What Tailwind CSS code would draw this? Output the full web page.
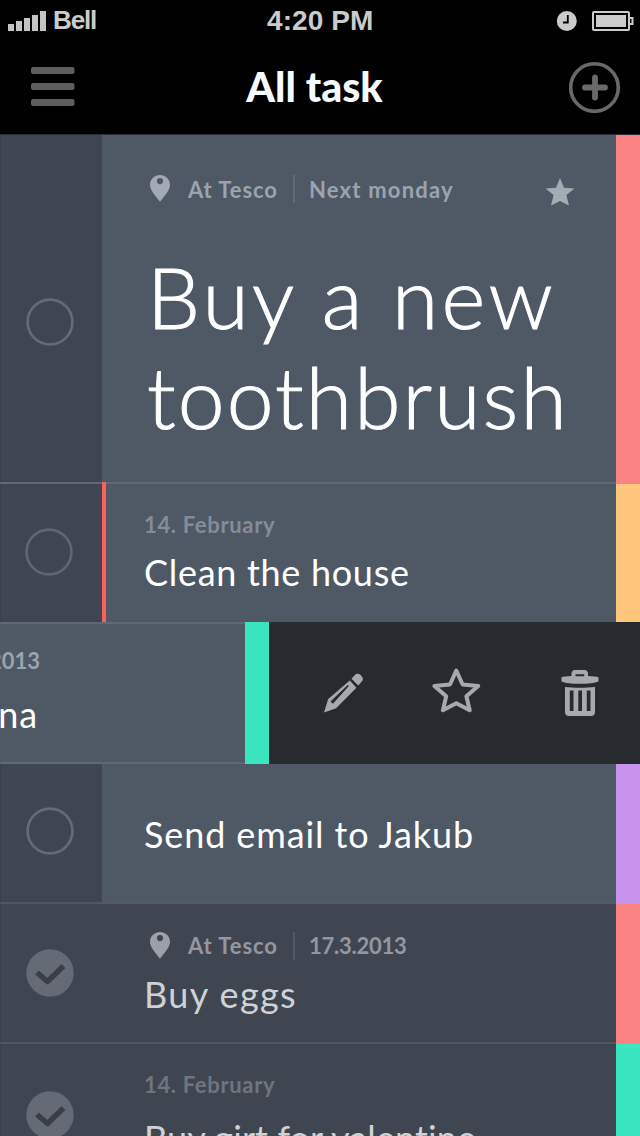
<!DOCTYPE html>
<html lang="en">
<head>
<meta charset="utf-8">
<title>All task</title>
<script src="https://cdn.jsdelivr.net/npm/@tailwindcss/browser@4"></script>
</head>
<body class="bg-black">
<main class="w-[640px] h-[1136px] overflow-hidden flex flex-col bg-black font-['Lato',sans-serif] whitespace-nowrap">

  <!-- Status bar -->
  <div class="h-10 shrink-0 grid grid-cols-[267px_1fr_84px] items-center text-[#cbcbcb] font-['Liberation_Sans',sans-serif] font-bold">
    <div class="flex items-center pl-2 gap-[6px]">
      <svg width="39" height="20" viewBox="0 0 39 20" fill="#c4c4c4"><path d="M0 13h6v7H0zM8 10h6v10H8zM16 7h6v13h-6zM24 4h6v16h-6zM32 0h6v20h-6z"/></svg>
      <span class="text-[26px] leading-10 tracking-[-1.15px] pb-[2px]">Bell</span>
    </div>
    <span class="text-[28px] leading-10 tracking-[0.1px]">4:20 PM</span>
    <div class="flex items-center gap-[15px]">
      <svg width="21" height="20" viewBox="0 0 21 20"><circle cx="10.8" cy="10" r="10" fill="#cbcbcb"/><path d="M11.800 4v7.500H7" fill="none" stroke="#000" stroke-width="1.800"/></svg>
      <svg width="42" height="20" viewBox="0 0 42 20" fill="none" stroke="#cbcbcb" stroke-width="2"><rect x="1" y="1" width="36" height="18" rx="1"/><rect x="4" y="4" width="30" height="12" fill="#cbcbcb" stroke="none"/><path d="M38 7h2.500v6H38"/></svg>
    </div>
  </div>

  <!-- Navigation bar -->
  <header class="h-[95px] shrink-0 flex items-start justify-between pl-[31px] pr-[19px] border-b border-[#27303a]">
    <svg class="mt-[27px]" width="44" height="40" viewBox="0 0 44 40" fill="#5d5d5d"><rect width="43.500" height="7" rx="2"/><rect y="16" width="43.500" height="7" rx="2"/><rect y="32" width="43.500" height="7" rx="2"/></svg>
    <h1 class="mt-[22px] mr-[15px] text-[41px] leading-[50px] font-black text-[#f5faff]">All task</h1>
    <svg class="mt-[21px]" width="52" height="52" viewBox="0 0 52 52" fill="none" stroke="#696969"><circle cx="25.500" cy="26.500" r="23.800" stroke-width="3.600"/><path d="M26 16.500v20M16 26.500h20" stroke-width="5.800" stroke-linecap="round"/></svg>
  </header>

  <!-- Featured task -->
  <section class="h-[349px] shrink-0 flex">
    <div class="w-[616px] flex border-b-2 border-[#5f6a76]">
      <div class="w-[102px] flex justify-center pr-[4px] pt-[163px] bg-[#404651] border-l border-[#3a404a]">
        <svg width="48" height="48" viewBox="0 0 48 48" fill="none" stroke="#646a76" stroke-width="2.700"><circle cx="24" cy="24" r="22.400"/></svg>
      </div>
      <div class="flex-1 pl-[43px] pt-10 bg-[#4e5965]">
        <div class="h-7 flex items-center text-[22px] leading-7 font-bold text-[#9ba3ae]">
          <svg class="ml-[5px] mb-[2px]" width="20" height="27" viewBox="0 0 20 27" fill="#a3a9b3"><path fill-rule="evenodd" d="M10 0C4.500 0 0 4.300 0 9.700c0 5.600 5.500 11 10 17 4.500-6 10-11.400 10-17C20 4.300 15.500 0 10 0zm0 3a3.100 3.100 0 1 1 0 6.200A3.100 3.100 0 0 1 10 3z"/></svg>
          <span class="ml-[18px] pt-[2px] w-[105px] tracking-[0.93px]">At Tesco</span>
          <i class="w-[2px] h-7 bg-[#616b76]"></i>
          <span class="ml-[14px] pt-[2px] tracking-[1.2px]">Next monday</span>
          <svg class="ml-[91px] mt-[6px]" width="30" height="28" viewBox="0 0 30 28" fill="#a5abb3"><path d="M15 0l4 9.800 10.500.6-8.100 6.700L24 27.500l-9-4.600-9 4.600 2.600-10.400L.5 10.400 11 9.800z"/></svg>
        </div>
        <h2 class="mt-[44px] pl-[2px] text-[84px] leading-[100px] font-light text-white [-webkit-text-stroke:1px_#fff]"><span class="block tracking-[3.4px]">Buy a new</span><span class="block tracking-[2.1px]">toothbrush</span></h2>
      </div>
    </div>
    <div class="w-6 bg-[#fa8282]"></div>
  </section>

  <!-- Overdue task -->
  <section class="h-[138px] shrink-0 flex">
    <div class="w-[102px] flex justify-center pr-[6px] pt-11 bg-[#404651] border-l border-[#3a404a]">
      <svg width="48" height="48" viewBox="0 0 48 48" fill="none" stroke="#5f6571" stroke-width="2.700"><circle cx="24" cy="24" r="22.400"/></svg>
    </div>
    <div class="relative w-1 bg-[#fd5f5f]"><i class="absolute -top-[2px] left-0 w-1 h-[2px] bg-[#fd5f5f]"></i></div>
    <div class="flex-1 pl-[38px] pt-[27px] bg-[#4e5965]">
      <p class="text-[22px] leading-7 font-bold tracking-[0.660px] text-[#848c97]">14. February</p>
      <p class="mt-[11px] text-[36px] leading-11 tracking-[0.7px] text-white">Clean the house</p>
    </div>
    <div class="w-6 bg-[#ffc67d]"></div>
  </section>

  <!-- Swiped task with its actions -->
  <section class="h-[142px] shrink-0 flex bg-[#272a2f]">
    <div class="w-[245px] shrink-0 overflow-hidden bg-[#4e5965] border-y-2 border-[#5f6a76]">
      <div class="w-10 flex flex-col items-end pt-[23px]">
        <p class="text-[22px] leading-7 font-bold text-[#9ba3ae]">17.3.2013</p>
        <p class="mt-[17px] pr-[2px] text-[36px] leading-11 tracking-[0.9px] text-white">Call Anna</p>
      </div>
    </div>
    <div class="w-6 shrink-0 bg-[#3be5bf]"></div>
    <div class="flex-1 grid grid-cols-[110px_127px_1fr] pl-[54px] pt-[46px]">
      <svg width="42" height="46" viewBox="323 668 42 46" fill="#a7a9ac"><path fill-rule="evenodd" d="M324 712.500l4.200-13.500 21.600-18.500 6.600 7.300-20.300 20.400zM330.500 701.500l2.400 2.200 16-17.600-1.200-1.200zM351.500 678.800l3.500-4c1.500-1.500 4-1.300 5.600.2l1.200 1.400c1.500 1.700 1.500 3.500.2 4.900l-3.700 4.100z"/></svg>
      <svg class="-ml-[2px]" width="50" height="46" viewBox="0 0 50 46" fill="none" stroke="#a7a9ac" stroke-width="4" stroke-linejoin="round"><path d="M25.300 2.500l6.300 14 15.600 1.500-11.800 10.200 3.300 14-13.400-7-13.400 7 3.300-14L3.400 18 19 16.500z"/></svg>
      <svg width="40" height="48" viewBox="0 0 40 48" fill="#a7a9ac"><path fill-rule="evenodd" d="M11.500 8V5.500c0-2 1.500-3.500 3.500-3.500h9.500c2 0 3.500 1.500 3.500 3.500V8c5 .2 8.500.7 10.500 1.300v4.200c-4 1.500-10 2.300-18.500 2.300S5 15 1.500 13.500V9.300C3.500 8.700 7 8.200 11.500 8zM15.500 6.300v2h8.700v-2zM5 19c9 .9 21 .9 30 0v25c0 2.500-1.500 4-4 4H9c-2.500 0-4-1.500-4-4zM9.800 22.500V43h3.700V22.500zM18.300 22.500V43h3.700V22.500zM26.800 22.500V43h3.700V22.500z"/></svg>
    </div>
  </section>

  <!-- Single-line task -->
  <section class="h-[140px] shrink-0 flex">
    <div class="w-[102px] flex justify-center pr-[4px] pt-[43px] bg-[#404651] border-l border-l-[#3a404a] border-b-2 border-b-[#505864]">
      <svg width="48" height="48" viewBox="0 0 48 48" fill="none" stroke="#646a76" stroke-width="2.700"><circle cx="24" cy="24" r="22.400"/></svg>
    </div>
    <p class="flex-1 pl-[42px] pt-12 bg-[#4e5965] border-b-2 border-[#515b67] text-[36px] leading-11 tracking-[0.89px] text-white">Send email to Jakub</p>
    <div class="w-6 bg-[#c893ec]"></div>
  </section>

  <!-- Completed tasks -->
  <section class="h-[140px] shrink-0 flex">
    <div class="w-[616px] flex bg-[#404651] border-b-2 border-[#515862]">
      <div class="w-[102px] flex justify-center pr-[4px] pt-[45px] border-l border-[#3a404a]">
        <svg width="48" height="48" viewBox="0 0 48 48"><circle cx="24" cy="24" r="23.700" fill="#656b76"/><path d="M11 23.500l10.500 9L37.500 17" fill="none" stroke="#3b3f45" stroke-width="5.500" stroke-linejoin="round"/></svg>
      </div>
      <div class="pl-[43px] pt-7">
        <div class="h-7 flex items-center text-[22px] leading-7 font-bold text-[#9297a0]">
          <svg class="ml-[5px] mb-[2px]" width="20" height="27" viewBox="0 0 20 27" fill="#9ca0a9"><path fill-rule="evenodd" d="M10 0C4.500 0 0 4.300 0 9.700c0 5.600 5.500 11 10 17 4.500-6 10-11.400 10-17C20 4.300 15.500 0 10 0zm0 3a3.100 3.100 0 1 1 0 6.200A3.100 3.100 0 0 1 10 3z"/></svg>
          <span class="ml-[18px] w-[105px] tracking-[0.93px]">At Tesco</span>
          <i class="w-[2px] h-7 bg-[#545a65]"></i>
          <span class="ml-[14px] tracking-[-0.25px]">17.3.2013</span>
        </div>
        <p class="mt-3 -ml-px text-[36px] leading-11 tracking-[1.41px] text-[#cfd1d3]">Buy eggs</p>
      </div>
    </div>
    <div class="w-6 bg-[#fa8282]"></div>
  </section>
  <section class="h-[140px] shrink-0 flex">
    <div class="w-[616px] flex bg-[#404651]">
      <div class="w-[102px] flex justify-center pr-[4px] pt-[47px] border-l border-[#3a404a]">
        <svg width="48" height="48" viewBox="0 0 48 48"><circle cx="24" cy="24" r="23.700" fill="#656b76"/><path d="M11 23.500l10.500 9L37.500 17" fill="none" stroke="#3b3f45" stroke-width="5.500" stroke-linejoin="round"/></svg>
      </div>
      <div class="pl-[42px] pt-[27px]">
        <p class="text-[22px] leading-7 font-bold tracking-[0.660px] text-[#6f757f]">14. February</p>
        <p class="mt-[17px] text-[36px] leading-11 tracking-[0.110px] text-[#cfd1d3]">Buy girt for valentine</p>
      </div>
    </div>
    <div class="w-6 bg-[#3be5bf]"></div>
  </section>
</main>
</body>
</html>
